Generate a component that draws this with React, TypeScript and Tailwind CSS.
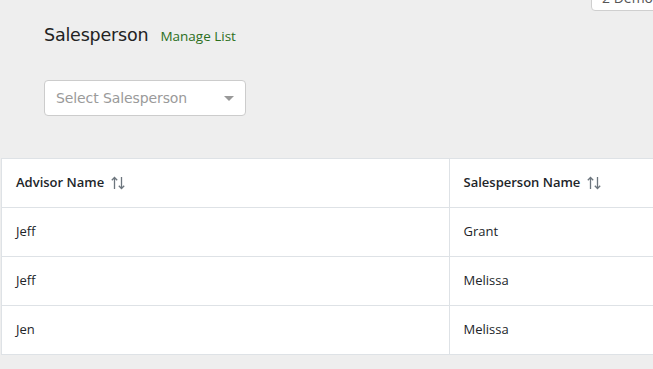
const rows = [
  { advisor: "Jeff", salesperson: "Grant" },
  { advisor: "Jeff", salesperson: "Melissa" },
  { advisor: "Jen", salesperson: "Melissa" },
];

function SortIcon() {
  return (
    <svg width="16" height="16" viewBox="0 0 16 16" className="ml-1.5 text-[#6c757d]" fill="none" stroke="currentColor" strokeWidth="1.3">
      <path d="M4.5 14V2.5M1.8 5.2L4.5 2.5L7.2 5.2" />
      <path d="M11.5 2V13.5M8.8 10.8L11.5 13.5L14.2 10.8" />
    </svg>
  );
}

export default function App() {
  const heading = { fontFamily: '"DejaVu Sans", sans-serif' };
  return (
    <div className="relative h-[369px] w-[653px] overflow-hidden bg-[#eeeeee] font-['Open_Sans',sans-serif]">
      <div className="absolute left-[591px] top-[-16px] whitespace-nowrap rounded-b-[4px] border border-[#cfcfcf] bg-white py-[2px] pl-[10px] pr-[30px] text-[14px] text-[#555]">
        2 Demo
      </div>

      <div className="px-[44px] pt-[22px]">
        <div className="flex items-baseline">
          <h2 style={heading} className="text-[17.5px] tracking-[-0.2px] text-[#222]">
            Salesperson
          </h2>
          <a href="#" className="ml-[12px] text-[13.5px] text-[#2c6e1c]">
            Manage List
          </a>
        </div>

        <div className="mt-[32px] flex h-[36px] w-[202px] items-center justify-between rounded-[4px] border border-[#cccccc] bg-white pl-[11px] pr-[11px]">
          <span style={heading} className="text-[14px] tracking-[-0.1px] text-[#9a9a9a]">
            Select Salesperson
          </span>
          <span className="h-0 w-0 border-x-[5px] border-t-[5px] border-x-transparent border-t-[#999]" />
        </div>
      </div>

      <div className="ml-[1px] mt-[42px] w-[700px] border-y border-l border-[#dee2e6] bg-white">
        <table className="w-full border-collapse text-[13px] text-[#212529]">
          <thead>
            <tr className="h-[48px] border-b border-[#dee2e6]">
              <th className="w-[447px] border-r border-[#dee2e6] pl-[14px] text-left font-semibold">
                <span className="flex items-center">
                  Advisor Name <SortIcon />
                </span>
              </th>
              <th className="pl-[14px] text-left font-semibold">
                <span className="flex items-center">
                  Salesperson Name <SortIcon />
                </span>
              </th>
            </tr>
          </thead>
          <tbody>
            {rows.map((r, i) => (
              <tr key={i} className={`h-[49px] ${i < rows.length - 1 ? "border-b border-[#dee2e6]" : ""}`}>
                <td className="border-r border-[#dee2e6] pl-[14px]">{r.advisor}</td>
                <td className="pl-[14px]">{r.salesperson}</td>
              </tr>
            ))}
          </tbody>
        </table>
      </div>
    </div>
  );
}
